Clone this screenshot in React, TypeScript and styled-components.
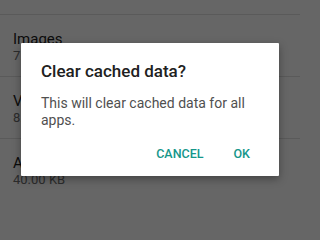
import React from "react";
import styled, { createGlobalStyle } from "styled-components";

const GlobalStyle = createGlobalStyle`
  html, body {
    margin: 0;
    padding: 0;
    background: #666666;
    font-family: Roboto, "Liberation Sans", sans-serif;
  }
`;

const Screen = styled.div`
  position: relative;
  width: 300px;
  height: 200px;
  overflow: hidden;
  background: #ffffff;
`;

const List = styled.div`
  display: flex;
  flex-direction: column;
  padding-top: 14px;
`;

const Row = styled.div`
  display: flex;
  flex-direction: column;
  height: 62px;
  box-sizing: border-box;
  border-top: 1px solid #e2e2e2;
  padding: 15px 0 0 13px;
`;

const RowTitle = styled.div`
  font-size: 15px;
  line-height: 18px;
  color: #1e1e1e;
`;

const RowSub = styled.div`
  font-size: 13px;
  line-height: 16px;
  color: #6e6e6e;
`;

const Scrim = styled.div`
  position: absolute;
  inset: 0;
  background: rgba(0, 0, 0, 0.6);
  display: flex;
  justify-content: center;
  align-items: flex-start;
  padding-top: 43px;
`;

const Dialog = styled.div`
  width: 258px;
  height: 133px;
  box-sizing: border-box;
  background: #ffffff;
  border-radius: 1px;
  box-shadow: 0 3px 8px rgba(0, 0, 0, 0.35);
  display: flex;
  flex-direction: column;
  padding: 17px 20px 0 20px;
`;

const Title = styled.div`
  font-size: 17px;
  font-weight: 500;
  line-height: 22px;
  color: #212121;
`;

const Body = styled.div`
  margin-top: 13px;
  font-size: 14px;
  line-height: 17px;
  color: #505050;
`;

const Actions = styled.div`
  display: flex;
  justify-content: flex-end;
  gap: 30px;
  margin-top: 17px;
  margin-right: 9px;
`;

const ActionButton = styled.button`
  border: none;
  background: none;
  padding: 0;
  font-family: Roboto, "Liberation Sans", sans-serif;
  font-size: 12.5px;
  font-weight: 500;
  line-height: 16px;
  color: #16968a;
`;

const rows = [
  { title: "Images", sub: "7.64 MB" },
  { title: "Videos", sub: "8.15 MB" },
  { title: "Audio", sub: "40.00 KB" },
];

export default function App() {
  return (
    <Screen>
      <GlobalStyle />
      <List>
        {rows.map((r) => (
          <Row key={r.title}>
            <RowTitle>{r.title}</RowTitle>
            <RowSub>{r.sub}</RowSub>
          </Row>
        ))}
      </List>
      <Scrim>
        <Dialog>
          <Title>Clear cached data?</Title>
          <Body>This will clear cached data for all apps.</Body>
          <Actions>
            <ActionButton>CANCEL</ActionButton>
            <ActionButton>OK</ActionButton>
          </Actions>
        </Dialog>
      </Scrim>
    </Screen>
  );
}
